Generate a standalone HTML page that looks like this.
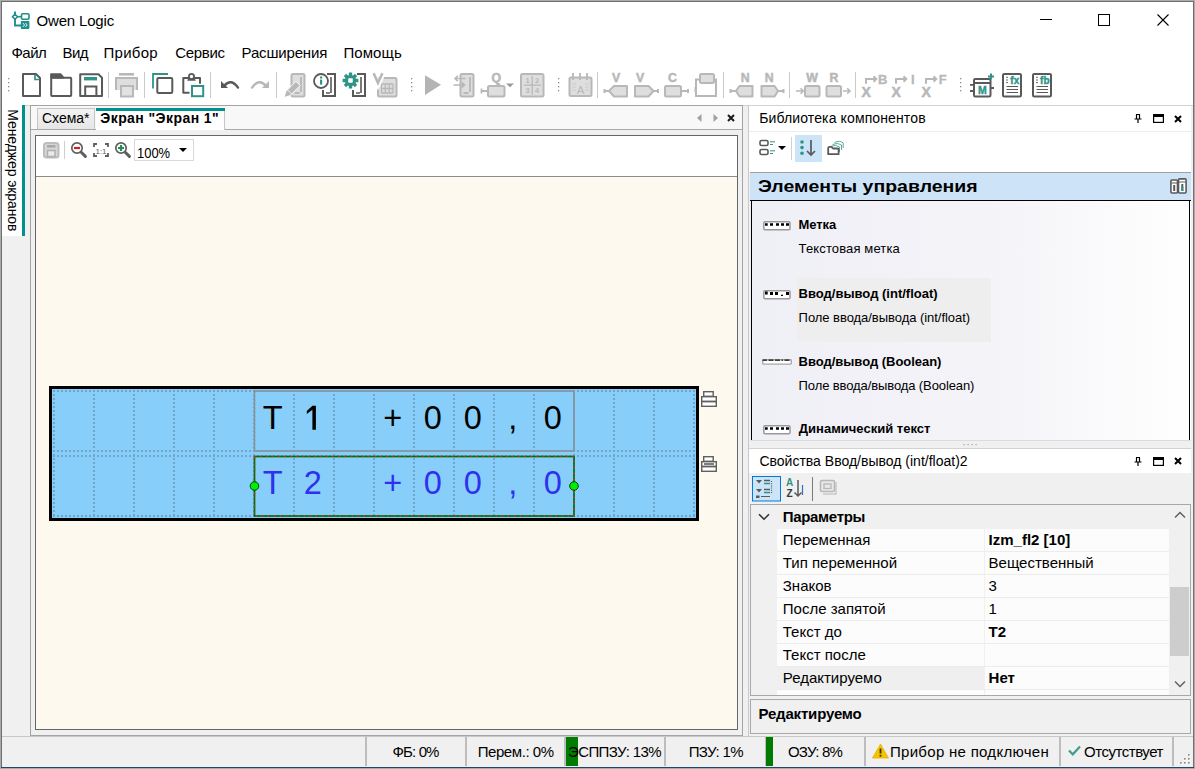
<!DOCTYPE html><html><head><meta charset="utf-8"><style>
html,body{margin:0;padding:0;}
body{width:1195px;height:769px;position:relative;overflow:hidden;background:#f0f0f0;font-family:"Liberation Sans",sans-serif;color:#000;}
.t{position:absolute;white-space:pre;}
svg{display:block;}
</style></head><body>
<div style="position:absolute;left:0px;top:0px;width:1195px;height:105px;background:#fff"></div>
<div style="position:absolute;left:2px;top:105px;width:1191px;height:1px;background:#d4d4d4"></div>
<div style="position:absolute;left:0px;top:0px;width:1195px;height:1px;background:#ababab"></div>
<div style="position:absolute;left:0px;top:0px;width:1px;height:769px;background:#ababab"></div>
<div style="position:absolute;left:1194px;top:0px;width:1px;height:769px;background:#ababab"></div>
<div style="position:absolute;left:0px;top:768px;width:1195px;height:1px;background:#ababab"></div>
<div style="position:absolute;left:1px;top:1px;width:1193px;height:1px;background:#6f6f6f"></div>
<div style="position:absolute;left:1px;top:1px;width:1px;height:767px;background:#6f6f6f"></div>
<div style="position:absolute;left:1193px;top:1px;width:1px;height:767px;background:#6f6f6f"></div>
<div style="position:absolute;left:1px;top:767px;width:1193px;height:1px;background:#1d4668"></div>
<div class="t" style="left:36.50px;top:11.80px;font-size:15px;line-height:18px;letter-spacing:-0.172px;">Owen Logic</div>
<div style="position:absolute;left:1040px;top:19px;width:12px;height:1px;background:#000"></div>
<div style="position:absolute;left:1098px;top:14px;width:12px;height:12px;border:1px solid #000;box-sizing:border-box"></div>
<svg style="position:absolute;left:1157px;top:14px;" width="12" height="12" viewBox="0 0 12 12"><path d="M0.5 0.5L11.5 11.5M11.5 0.5L0.5 11.5" stroke="#000" stroke-width="1.1"/></svg>
<div class="t" style="left:11.40px;top:43.80px;font-size:15px;line-height:18px;letter-spacing:-0.469px;">Файл</div>
<div class="t" style="left:62.50px;top:43.80px;font-size:15px;line-height:18px;letter-spacing:-0.542px;">Вид</div>
<div class="t" style="left:103.50px;top:43.80px;font-size:15px;line-height:18px;letter-spacing:0.286px;">Прибор</div>
<div class="t" style="left:175.20px;top:43.80px;font-size:15px;line-height:18px;letter-spacing:-0.293px;">Сервис</div>
<div class="t" style="left:241.60px;top:43.80px;font-size:15px;line-height:18px;letter-spacing:-0.172px;">Расширения</div>
<div class="t" style="left:343.40px;top:43.80px;font-size:15px;line-height:18px;letter-spacing:0.094px;">Помощь</div>
<svg style="position:absolute;left:0;top:0" width="1195" height="105" viewBox="0 0 1195 105"><rect x="8" y="78" width="1.3" height="1.3" fill="#8a8a8a"/><rect x="8" y="82" width="1.3" height="1.3" fill="#8a8a8a"/><rect x="8" y="86" width="1.3" height="1.3" fill="#8a8a8a"/><rect x="8" y="90" width="1.3" height="1.3" fill="#8a8a8a"/><path d="M23 74H36L40 78V96H23Z" fill="none" stroke="#595959" stroke-width="2" stroke-linejoin="round"/><path d="M35 74.5V79.5H39.5" fill="none" stroke="#2f9488" stroke-width="1.7"/><path d="M51 77.5V74.2H60.5L63.5 77.5Z" fill="#595959" stroke="#595959" stroke-width="1.8" stroke-linejoin="round"/><rect x="51.2" y="77.8" width="20" height="18.2" fill="none" stroke="#595959" stroke-width="2" rx="0.8"/><path d="M80.2 74.2H98.5L102 77.7V96H80.2Z" fill="none" stroke="#595959" stroke-width="2" stroke-linejoin="round"/><rect x="84" y="77" width="13" height="3.4" fill="#2f9488"/><path d="M85.2 96V86.4H96.4V96" fill="none" stroke="#595959" stroke-width="2"/><rect x="108" y="72" width="1" height="26" fill="#cacaca"/><rect x="119" y="73" width="15" height="2.6" fill="#b8b8b8"/><path d="M116 90V78H137V90" fill="#dedede" stroke="#b8b8b8" stroke-width="2"/><rect x="121" y="86" width="12" height="10.5" fill="#e2e2e2" stroke="#b8b8b8" stroke-width="2"/><rect x="144" y="72" width="1" height="26" fill="#cacaca"/><path d="M153 88.6V74H168" fill="none" stroke="#2f9488" stroke-width="1.8"/><rect x="157.3" y="78" width="15" height="15" rx="1.2" fill="none" stroke="#595959" stroke-width="2"/><path d="M189.5 92.8H183.3V78H200V83.8" fill="none" stroke="#595959" stroke-width="2" stroke-linejoin="round"/><path d="M187.2 80.8L188.8 77.2H194.2L195.8 80.8Z" fill="#595959"/><circle cx="191.5" cy="76.5" r="2.6" fill="#fff" stroke="#595959" stroke-width="1.8"/><rect x="192" y="86" width="11.2" height="10.2" fill="#fff" stroke="#2f9488" stroke-width="2"/><rect x="210" y="72" width="1" height="26" fill="#cacaca"/><path d="M224.5 85.6Q231 78 238 87.6" fill="none" stroke="#595959" stroke-width="2.4" stroke-linecap="round"/><path d="M221 81V88H228Z" fill="#595959"/><path d="M265.5 85.6Q259 78 252 87.6" fill="none" stroke="#b8b8b8" stroke-width="2.4" stroke-linecap="round"/><path d="M269 81V88H262Z" fill="#b8b8b8"/><rect x="276" y="72" width="1" height="26" fill="#cacaca"/><rect x="291.5" y="74" width="13" height="22.5" rx="1.5" fill="#dedede" stroke="#b8b8b8" stroke-width="2"/><path d="M301.0 77V92M294.5 93H299.5" stroke="#b8b8b8" stroke-width="1.8"/><path d="M284 97.5L285.8 91.5L296 81.3L300.2 85.5L290 95.7Z" fill="#b8b8b8" stroke="#fff" stroke-width="1"/><path d="M287.5 89.8L291.7 94" stroke="#fff" stroke-width="0.8"/><path d="M327 74H335V96H323V90" fill="none" stroke="#595959" stroke-width="2"/><path d="M331 77V93M326 93H330" stroke="#595959" stroke-width="1.6"/><circle cx="321" cy="81" r="7" fill="#fff" stroke="#595959" stroke-width="1.8"/><rect x="320" y="76.5" width="2.2" height="2" fill="#2f9488"/><rect x="320" y="79.6" width="2.2" height="5" fill="#2f9488"/><path d="M357 74H365V96H353V90" fill="none" stroke="#595959" stroke-width="2"/><path d="M361 77V93M356 93H360" stroke="#595959" stroke-width="1.6"/><rect x="348.8" y="72.6" width="3.4" height="4" rx="0.3" transform="rotate(0 350.5 80.5)" fill="#2f9488"/><rect x="348.8" y="72.6" width="3.4" height="4" rx="0.3" transform="rotate(45 350.5 80.5)" fill="#2f9488"/><rect x="348.8" y="72.6" width="3.4" height="4" rx="0.3" transform="rotate(90 350.5 80.5)" fill="#2f9488"/><rect x="348.8" y="72.6" width="3.4" height="4" rx="0.3" transform="rotate(135 350.5 80.5)" fill="#2f9488"/><rect x="348.8" y="72.6" width="3.4" height="4" rx="0.3" transform="rotate(180 350.5 80.5)" fill="#2f9488"/><rect x="348.8" y="72.6" width="3.4" height="4" rx="0.3" transform="rotate(225 350.5 80.5)" fill="#2f9488"/><rect x="348.8" y="72.6" width="3.4" height="4" rx="0.3" transform="rotate(270 350.5 80.5)" fill="#2f9488"/><rect x="348.8" y="72.6" width="3.4" height="4" rx="0.3" transform="rotate(315 350.5 80.5)" fill="#2f9488"/><circle cx="350.5" cy="80.5" r="5.6" fill="#2f9488"/><rect x="348.2" y="78.2" width="4.6" height="4.6" rx="0.8" fill="#fff"/><rect x="378" y="78" width="18.5" height="18.5" rx="1.5" fill="#dedede" stroke="#b8b8b8" stroke-width="2"/><path d="M381.5 84H393M381.5 88.5H393M381.5 93H393M381.5 84V93M385.3 84V93M389.2 84V93M393 84V93" stroke="#b8b8b8" stroke-width="1.3" fill="none"/><path d="M372.5 73L378 84.5L383.5 73" stroke="#fff" stroke-width="5" fill="none"/><path d="M373.6 73.3L378 82.8L382.4 73.3" stroke="#b8b8b8" stroke-width="2.6" fill="none"/><rect x="411" y="78" width="1.3" height="1.3" fill="#8a8a8a"/><rect x="411" y="82" width="1.3" height="1.3" fill="#8a8a8a"/><rect x="411" y="86" width="1.3" height="1.3" fill="#8a8a8a"/><rect x="411" y="90" width="1.3" height="1.3" fill="#8a8a8a"/><path d="M425 75.3L441 84.8L425 95Z" fill="#b4b4b4"/><rect x="460.5" y="74" width="13" height="22.5" rx="1.5" fill="#dedede" stroke="#b8b8b8" stroke-width="2"/><path d="M470.0 77V92M463.5 93H468.5" stroke="#b8b8b8" stroke-width="1.8"/><path d="M465.5 78.5H455M457.8 75.8L455 78.5L457.8 81.2M453.5 85H464.5M461.7 82.3L464.5 85L461.7 87.7" stroke="#b8b8b8" stroke-width="1.6" fill="none"/><text x="496.3" y="82.3" font-family="Liberation Sans" font-weight="bold" font-size="12.3" fill="#b8b8b8" stroke="#b8b8b8" stroke-width="0.5" text-anchor="middle">Q</text><rect x="488" y="86" width="16.5" height="10.5" rx="1.5" fill="#dedede" stroke="#b8b8b8" stroke-width="2"/><path d="M481.5 91H488M481.5 88.5V93.5" stroke="#b8b8b8" stroke-width="1.8"/><path d="M506 83.5H514L510 87.3Z" fill="#9a9a9a"/><rect x="521" y="74" width="22.5" height="22.5" rx="1.5" fill="#dedede" stroke="#b8b8b8" stroke-width="2"/><path d="M532.2 76V94.5M524 85.2H541" stroke="#b8b8b8" stroke-width="1.3"/><text x="527.7" y="83" font-family="Liberation Sans" font-weight="bold" font-size="7.5" fill="#b8b8b8" text-anchor="middle">1</text><text x="537" y="83" font-family="Liberation Sans" font-weight="bold" font-size="7.5" fill="#b8b8b8" text-anchor="middle">2</text><text x="527.7" y="93.3" font-family="Liberation Sans" font-weight="bold" font-size="7.5" fill="#b8b8b8" text-anchor="middle">3</text><text x="537" y="93.3" font-family="Liberation Sans" font-weight="bold" font-size="7.5" fill="#b8b8b8" text-anchor="middle">4</text><rect x="558" y="78" width="1.3" height="1.3" fill="#8a8a8a"/><rect x="558" y="82" width="1.3" height="1.3" fill="#8a8a8a"/><rect x="558" y="86" width="1.3" height="1.3" fill="#8a8a8a"/><rect x="558" y="90" width="1.3" height="1.3" fill="#8a8a8a"/><rect x="569.5" y="77.5" width="22" height="18.5" rx="1.5" fill="#dedede" stroke="#b8b8b8" stroke-width="2"/><path d="M573 73V80M580 73V80M587 73V80" stroke="#b8b8b8" stroke-width="1.8"/><path d="M572 84H576M572 87H576M572 90H576M585 84H589M585 87H589M585 90H589" stroke="#c8c8c8" stroke-width="0.9"/><text x="580.5" y="93.8" font-family="Liberation Sans" font-size="11.5" fill="#b8b8b8" text-anchor="middle">A</text><rect x="597" y="72" width="1" height="26" fill="#cacaca"/><text x="616" y="82.3" font-family="Liberation Sans" font-weight="bold" font-size="12.3" fill="#b8b8b8" stroke="#b8b8b8" stroke-width="0.5" text-anchor="middle">V</text><path d="M604.5 91H609M604.5 89V93M609 91L614 86H627V96.5H614Z" stroke="#b8b8b8" stroke-width="2" fill="#dedede" stroke-linejoin="round"/><text x="640" y="82.3" font-family="Liberation Sans" font-weight="bold" font-size="12.3" fill="#b8b8b8" stroke="#b8b8b8" stroke-width="0.5" text-anchor="middle">V</text><path d="M658 91H653.5M658 89V93M653.5 91L648.5 86H635V96.5H648.5Z" stroke="#b8b8b8" stroke-width="2" fill="#dedede" stroke-linejoin="round"/><text x="672.5" y="82.3" font-family="Liberation Sans" font-weight="bold" font-size="12.3" fill="#b8b8b8" stroke="#b8b8b8" stroke-width="0.5" text-anchor="middle">C</text><rect x="665" y="86" width="16" height="10.5" rx="1.5" fill="#dedede" stroke="#b8b8b8" stroke-width="2"/><path d="M681 91H688M688 89V93" stroke="#b8b8b8" stroke-width="2"/><path d="M699 79.5H696V96H716V79.5H714" fill="none" stroke="#b8b8b8" stroke-width="2"/><rect x="700" y="74" width="14" height="9" rx="1.5" fill="#dedede" stroke="#b8b8b8" stroke-width="2"/><rect x="694.5" y="87" width="2.5" height="5" fill="#b8b8b8"/><rect x="723" y="72" width="1" height="26" fill="#cacaca"/><text x="745.3" y="82.3" font-family="Liberation Sans" font-weight="bold" font-size="12.3" fill="#b8b8b8" stroke="#b8b8b8" stroke-width="0.5" text-anchor="middle">N</text><path d="M730.5 91H736M730.5 89V93M736 91L739.5 86H752.5V96.5H739.5Z" stroke="#b8b8b8" stroke-width="2" fill="#dedede" stroke-linejoin="round"/><text x="769.3" y="82.3" font-family="Liberation Sans" font-weight="bold" font-size="12.3" fill="#b8b8b8" stroke="#b8b8b8" stroke-width="0.5" text-anchor="middle">N</text><path d="M783.5 91H778M783.5 89V93M778 91L774.5 86H761.5V96.5H774.5Z" stroke="#b8b8b8" stroke-width="2" fill="#dedede" stroke-linejoin="round"/><rect x="789" y="72" width="1" height="26" fill="#cacaca"/><text x="812" y="82.3" font-family="Liberation Sans" font-weight="bold" font-size="12.3" fill="#b8b8b8" stroke="#b8b8b8" stroke-width="0.5" text-anchor="middle">W</text><rect x="805" y="86" width="14.5" height="10.5" rx="1.5" fill="#dedede" stroke="#b8b8b8" stroke-width="2"/><path d="M796 91H803M800.5 88.2L803.3 91L800.5 93.8" stroke="#b8b8b8" stroke-width="1.6" fill="none"/><text x="834" y="82.3" font-family="Liberation Sans" font-weight="bold" font-size="12.3" fill="#b8b8b8" stroke="#b8b8b8" stroke-width="0.5" text-anchor="middle">R</text><rect x="826.5" y="86" width="14.5" height="10.5" rx="1.5" fill="#dedede" stroke="#b8b8b8" stroke-width="2"/><path d="M843 91H850M847.2 88.2L850 91L847.2 93.8" stroke="#b8b8b8" stroke-width="1.6" fill="none"/><rect x="855" y="72" width="1" height="26" fill="#cacaca"/><text x="866.2" y="97.3" font-family="Liberation Sans" font-weight="bold" font-size="14" fill="#b8b8b8" stroke="#b8b8b8" stroke-width="0.5" text-anchor="middle">X</text><path d="M866 83.8V79H876M873.5 76.3L876.3 79L873.5 81.7" transform="translate(0,0)" stroke="#b8b8b8" stroke-width="2" fill="none"/><text x="882.8" y="83.8" font-family="Liberation Sans" font-weight="bold" font-size="13" fill="#b8b8b8" stroke="#b8b8b8" stroke-width="0.3" text-anchor="middle">B</text><text x="896.2" y="97.3" font-family="Liberation Sans" font-weight="bold" font-size="14" fill="#b8b8b8" stroke="#b8b8b8" stroke-width="0.5" text-anchor="middle">X</text><path d="M866 83.8V79H876M873.5 76.3L876.3 79L873.5 81.7" transform="translate(30,0)" stroke="#b8b8b8" stroke-width="2" fill="none"/><text x="912.8" y="83.8" font-family="Liberation Sans" font-weight="bold" font-size="13" fill="#b8b8b8" stroke="#b8b8b8" stroke-width="0.3" text-anchor="middle">I</text><text x="926.2" y="97.3" font-family="Liberation Sans" font-weight="bold" font-size="14" fill="#b8b8b8" stroke="#b8b8b8" stroke-width="0.5" text-anchor="middle">X</text><path d="M866 83.8V79H876M873.5 76.3L876.3 79L873.5 81.7" transform="translate(60,0)" stroke="#b8b8b8" stroke-width="2" fill="none"/><text x="942.8" y="83.8" font-family="Liberation Sans" font-weight="bold" font-size="13" fill="#b8b8b8" stroke="#b8b8b8" stroke-width="0.3" text-anchor="middle">F</text><rect x="960" y="78" width="1.3" height="1.3" fill="#8a8a8a"/><rect x="960" y="82" width="1.3" height="1.3" fill="#8a8a8a"/><rect x="960" y="86" width="1.3" height="1.3" fill="#8a8a8a"/><rect x="960" y="90" width="1.3" height="1.3" fill="#8a8a8a"/><rect x="974" y="79" width="16.5" height="17.5" rx="1.2" fill="#fff" stroke="#595959" stroke-width="2"/><path d="M974 83H990.5M970 84.8H974M970 91H974M990.5 88H994" stroke="#595959" stroke-width="1.8"/><text x="982.3" y="93.6" font-family="Liberation Sans" font-weight="bold" font-size="10.5" fill="#2f9488" stroke="#2f9488" stroke-width="0.4" text-anchor="middle">M</text><path d="M991 73.5V79.5M988 76.5H994" stroke="#2f9488" stroke-width="2"/><rect x="1003" y="74" width="18" height="22.5" rx="1.2" fill="#fff" stroke="#595959" stroke-width="2"/><path d="M1006 77.3H1008M1006 80H1008M1006 82.6H1008" stroke="#595959" stroke-width="0.9"/><path d="M1006.5 86.5H1018M1006.5 89.5H1018M1006.5 92.5H1018" stroke="#595959" stroke-width="1"/><text x="1014.8" y="84" font-family="Liberation Sans" font-weight="bold" font-size="10" fill="#2f9488" stroke="#2f9488" stroke-width="0.4" text-anchor="middle">fx</text><rect x="1033" y="74" width="18" height="22.5" rx="1.2" fill="#fff" stroke="#595959" stroke-width="2"/><path d="M1036 77.3H1038M1036 80H1038M1036 82.6H1038" stroke="#595959" stroke-width="0.9"/><path d="M1036.5 86.5H1048M1036.5 89.5H1048M1036.5 92.5H1048" stroke="#595959" stroke-width="1"/><text x="1044.8" y="84" font-family="Liberation Sans" font-weight="bold" font-size="10" fill="#2f9488" stroke="#2f9488" stroke-width="0.4" text-anchor="middle">fb</text></svg>
<svg style="position:absolute;left:0;top:0" width="40" height="40" viewBox="0 0 40 40"><path d="M15 11.5V25.5H21" fill="none" stroke="#1f8f8a" stroke-width="1.9"/><path d="M15 14.2L17.5 16.7L15 19.2L12.5 16.7Z" fill="#fff" stroke="#1f8f8a" stroke-width="1.6"/><path d="M17.5 16.7H22" stroke="#1f8f8a" stroke-width="1.6"/><rect x="21.5" y="13.7" width="7.5" height="5.5" rx="1.2" fill="#fff" stroke="#1f8f8a" stroke-width="1.6"/><rect x="20.8" y="21" width="8.6" height="8" rx="1" fill="#1f8f8a"/><path d="M22.8 23L24.6 25L22.8 27M25.4 23L27.2 25L25.4 27" stroke="#fff" stroke-width="0.9" fill="none"/></svg>
<div style="position:absolute;left:2px;top:105px;width:20px;height:131px;background:#fff"></div>
<div style="position:absolute;left:22px;top:105px;width:3px;height:131px;background:#00918f"></div>
<div class="t" style="left:0;top:0;font-size:14px;line-height:17px;letter-spacing:-0.1px;transform-origin:0 0;transform:translate(21.4px,109.3px) rotate(90deg)">Менеджер экранов</div>
<div style="position:absolute;left:30px;top:105px;width:713px;height:631px;border:1px solid #a3a3a3;box-sizing:border-box;background:#f0f0f0"></div>
<div style="position:absolute;left:31px;top:106px;width:711px;height:23px;background:#f8f8f8"></div>
<div style="position:absolute;left:31px;top:129px;width:711px;height:1px;background:#a9a9a9"></div>
<div style="position:absolute;left:37px;top:108px;width:58px;height:21px;border:1px solid #c6c6c6;border-bottom:none;box-sizing:border-box;background:linear-gradient(#f2f2f2,#e6e6e6)"></div>
<div class="t" style="left:42.00px;top:110.35px;font-size:14px;line-height:17px;letter-spacing:-0.032px;">Схема*</div>
<div style="position:absolute;left:96px;top:108px;width:129px;height:22px;background:#fff;border-right:1px solid #c6c6c6;box-sizing:border-box"></div>
<div style="position:absolute;left:96px;top:108px;width:129px;height:3px;background:#00918f"></div>
<div class="t" style="left:100.30px;top:110.35px;font-size:14px;line-height:17px;font-weight:bold;letter-spacing:0.432px;">Экран &quot;Экран 1&quot;</div>
<svg style="position:absolute;left:697px;top:114px;" width="5" height="8" viewBox="0 0 5 8"><path d="M4.5 0L0 4L4.5 8Z" fill="#a0a0a0"/></svg>
<svg style="position:absolute;left:713px;top:114px;" width="5" height="8" viewBox="0 0 5 8"><path d="M0.5 0L5 4L0.5 8Z" fill="#a0a0a0"/></svg>
<svg style="position:absolute;left:727px;top:114px;" width="8" height="8" viewBox="0 0 8 8"><path d="M1 1L7 7M7 1L1 7" stroke="#1a1a1a" stroke-width="2"/></svg>
<div style="position:absolute;left:35px;top:135px;width:703px;height:595px;border:1px solid #666;box-sizing:border-box;background:#fff"></div>
<div style="position:absolute;left:36px;top:176px;width:701px;height:1px;background:#8c8c8c"></div>
<div style="position:absolute;left:36px;top:177px;width:701px;height:552px;background:#fef9ee"></div>
<svg style="position:absolute;left:0;top:0" width="200" height="170" viewBox="0 0 200 170"><rect x="44" y="143" width="14.5" height="14.5" rx="2.5" fill="#d6d6d6" stroke="#bdbdbd" stroke-width="2"/><rect x="47" y="145" width="8.5" height="2.6" fill="#a9a9a9"/><rect x="47.5" y="150.5" width="7.5" height="6" fill="#eaeaea" stroke="#b0b0b0" stroke-width="1.5"/><rect x="64" y="141" width="1" height="18" fill="#cfcfcf"/><path d="M81.2 152.2L85.4 156.4" stroke="#5f5f5f" stroke-width="3" stroke-linecap="round"/><circle cx="77" cy="148" r="5.2" fill="#fff" stroke="#5f5f5f" stroke-width="1.7"/><rect x="74" y="146.9" width="6" height="2.2" fill="#d42020"/><path d="M125.2 152.2L129.4 156.4" stroke="#5f5f5f" stroke-width="3" stroke-linecap="round"/><circle cx="121" cy="148" r="5.2" fill="#fff" stroke="#5f5f5f" stroke-width="1.7"/><path d="M118 148H124M121 145V151" stroke="#1f8f5a" stroke-width="2.2"/><path d="M94 147V144H97M105 144H108V147M108 153V156H105M97 156H94V153" fill="none" stroke="#5f5f5f" stroke-width="1.8"/><text x="101" y="153.5" font-family="Liberation Sans" font-size="8" fill="#5f5f5f" text-anchor="middle">1:1</text></svg>
<div style="position:absolute;left:134px;top:139px;width:60px;height:22px;border:1px solid #d9d9d9;box-sizing:border-box;background:#fff"></div>
<div class="t" style="left:136.70px;top:143.13px;font-size:15.5px;line-height:19px;transform-origin:0 0;transform:scaleX(0.835);">100%</div>
<svg style="position:absolute;left:179px;top:148px;" width="8" height="4" viewBox="0 0 8 4"><path d="M0 0H8L4 4Z" fill="#000"/></svg>
<div style="position:absolute;left:49px;top:386px;width:650px;height:135px;background:#000"></div>
<div style="position:absolute;left:52px;top:389px;width:644px;height:129px;background:#87cefa"></div>
<svg style="position:absolute;left:0;top:0" width="760" height="530" viewBox="0 0 760 530"><defs><pattern id="ph" x="53" y="0" width="4" height="2" patternUnits="userSpaceOnUse"><rect width="2" height="2" fill="#72a5ca"/></pattern><pattern id="pv" x="0" y="390" width="2" height="4" patternUnits="userSpaceOnUse"><rect width="2" height="2" fill="#72a5ca"/></pattern></defs><rect x="53" y="390" width="643" height="2" fill="url(#ph)"/><rect x="53" y="450" width="643" height="2" fill="url(#ph)"/><rect x="53" y="455" width="643" height="2" fill="url(#ph)"/><rect x="53" y="515" width="643" height="2" fill="url(#ph)"/><rect x="53" y="390" width="2" height="127" fill="url(#pv)"/><rect x="93" y="390" width="2" height="127" fill="url(#pv)"/><rect x="133" y="390" width="2" height="127" fill="url(#pv)"/><rect x="173" y="390" width="2" height="127" fill="url(#pv)"/><rect x="213" y="390" width="2" height="127" fill="url(#pv)"/><rect x="253" y="390" width="2" height="127" fill="url(#pv)"/><rect x="293" y="390" width="2" height="127" fill="url(#pv)"/><rect x="333" y="390" width="2" height="127" fill="url(#pv)"/><rect x="373" y="390" width="2" height="127" fill="url(#pv)"/><rect x="413" y="390" width="2" height="127" fill="url(#pv)"/><rect x="453" y="390" width="2" height="127" fill="url(#pv)"/><rect x="493" y="390" width="2" height="127" fill="url(#pv)"/><rect x="533" y="390" width="2" height="127" fill="url(#pv)"/><rect x="573" y="390" width="2" height="127" fill="url(#pv)"/><rect x="613" y="390" width="2" height="127" fill="url(#pv)"/><rect x="653" y="390" width="2" height="127" fill="url(#pv)"/><rect x="693" y="390" width="2" height="127" fill="url(#pv)"/><rect x="254.5" y="391" width="319.5" height="60" fill="none" stroke="#8c8c8c" stroke-width="1.7" stroke-dasharray="3 1"/><rect x="254.5" y="456.5" width="319.5" height="59.5" fill="none" stroke="#0a6a0a" stroke-width="1.7"/><rect x="254.5" y="456.5" width="319.5" height="59.5" fill="none" stroke="#ff2020" stroke-width="1.7" stroke-dasharray="1 5"/><circle cx="254.5" cy="486" r="4.3" fill="#00ee00" stroke="#004400" stroke-width="1"/><circle cx="574" cy="486" r="4.3" fill="#00ee00" stroke="#004400" stroke-width="1"/></svg>
<div class="t" style="left:252.8px;top:398px;width:40px;text-align:center;font-size:32.5px;line-height:40px;">T</div>
<div class="t" style="left:252.8px;top:463px;width:40px;text-align:center;font-size:32.5px;line-height:40px;color:#3030ee">T</div>
<svg style="position:absolute;left:300px;top:400px;" width="24" height="36" viewBox="0 0 24 36"><path d="M12.4 5.8H15.9V29.7H12.4V9.8L6.8 13.9V10.9Z" fill="#000"/></svg>
<div class="t" style="left:292.8px;top:463px;width:40px;text-align:center;font-size:32.5px;line-height:40px;color:#3030ee">2</div>
<div class="t" style="left:372.8px;top:398px;width:40px;text-align:center;font-size:32.5px;line-height:40px;">+</div>
<div class="t" style="left:372.8px;top:463px;width:40px;text-align:center;font-size:32.5px;line-height:40px;color:#3030ee">+</div>
<div class="t" style="left:412.8px;top:398px;width:40px;text-align:center;font-size:32.5px;line-height:40px;">0</div>
<div class="t" style="left:412.8px;top:463px;width:40px;text-align:center;font-size:32.5px;line-height:40px;color:#3030ee">0</div>
<div class="t" style="left:452.8px;top:398px;width:40px;text-align:center;font-size:32.5px;line-height:40px;">0</div>
<div class="t" style="left:452.8px;top:463px;width:40px;text-align:center;font-size:32.5px;line-height:40px;color:#3030ee">0</div>
<div class="t" style="left:492.79999999999995px;top:398px;width:40px;text-align:center;font-size:32.5px;line-height:40px;">,</div>
<div class="t" style="left:492.79999999999995px;top:463px;width:40px;text-align:center;font-size:32.5px;line-height:40px;color:#3030ee">,</div>
<div class="t" style="left:532.8px;top:398px;width:40px;text-align:center;font-size:32.5px;line-height:40px;">0</div>
<div class="t" style="left:532.8px;top:463px;width:40px;text-align:center;font-size:32.5px;line-height:40px;color:#3030ee">0</div>
<svg style="position:absolute;left:701px;top:391px;" width="16" height="16" viewBox="0 0 16 16"><rect x="2.7" y="0.7" width="9.5" height="4.6" fill="#fff" stroke="#5f5f5f" stroke-width="1.4"/><rect x="0.7" y="5.7" width="14.6" height="4.6" fill="#fff" stroke="#5f5f5f" stroke-width="1.4"/><rect x="0.7" y="10.7" width="14.6" height="4.6" fill="#fff" stroke="#5f5f5f" stroke-width="1.4"/><rect x="3" y="7.2" width="10" height="1.6" fill="#fff"/></svg>
<svg style="position:absolute;left:701px;top:456px;" width="16" height="16" viewBox="0 0 16 16"><rect x="2.7" y="0.7" width="9.5" height="4.6" fill="#fff" stroke="#5f5f5f" stroke-width="1.4"/><rect x="0.7" y="5.7" width="14.6" height="4.6" fill="#fff" stroke="#5f5f5f" stroke-width="1.4"/><rect x="0.7" y="10.7" width="14.6" height="4.6" fill="#fff" stroke="#5f5f5f" stroke-width="1.4"/><rect x="3" y="7.2" width="10" height="1.6" fill="#5f5f5f"/></svg>
<div style="position:absolute;left:748px;top:105px;width:444px;height:631px;background:#f0f0f0"></div>
<div style="position:absolute;left:748px;top:105px;width:444px;height:1px;background:#d2d2d2"></div>
<div style="position:absolute;left:748px;top:105px;width:1px;height:631px;background:#c9c9c9"></div>
<div style="position:absolute;left:749px;top:106px;width:442px;height:25px;background:#fff"></div>
<div style="position:absolute;left:749px;top:131px;width:442px;height:1px;background:#ececec"></div>
<div style="position:absolute;left:749px;top:132px;width:442px;height:40px;background:#fff"></div>
<div class="t" style="left:759.20px;top:110.35px;font-size:14px;line-height:17px;letter-spacing:0.124px;">Библиотека компонентов</div>
<svg style="position:absolute;left:1134px;top:114px;" width="8" height="9" viewBox="0 0 8 9"><path d="M2 0.5H6M2.5 0.5V5M5.5 0.5V5M0.5 5H7.5M4 5V9" stroke="#000" stroke-width="1.2" fill="none"/></svg>
<svg style="position:absolute;left:1153px;top:114px;" width="11" height="9" viewBox="0 0 11 9"><rect x="0.6" y="0.6" width="9.8" height="7.8" fill="none" stroke="#000" stroke-width="1.2"/><rect x="0.6" y="0.6" width="9.8" height="2.4" fill="#000"/></svg>
<svg style="position:absolute;left:1174px;top:114.5px;" width="8" height="8" viewBox="0 0 8 8"><path d="M1 1L7 7M7 1L1 7" stroke="#000" stroke-width="2"/></svg>
<svg style="position:absolute;left:0;top:0" width="1195" height="200" viewBox="0 0 1195 200"><rect x="760" y="140.5" width="8" height="5" rx="1.5" fill="none" stroke="#5a5a5a" stroke-width="1.6"/><rect x="760" y="149.5" width="8" height="5" rx="1.5" fill="none" stroke="#5a5a5a" stroke-width="1.6"/><rect x="770" y="141.3" width="5" height="1" fill="#2f9488"/><rect x="770" y="144" width="3" height="1" fill="#2f9488"/><rect x="770" y="150.3" width="5" height="1" fill="#2f9488"/><rect x="770" y="153" width="3" height="1" fill="#2f9488"/><path d="M778 146H786L782 150Z" fill="#000"/><rect x="791" y="137" width="1" height="23" fill="#d0d0d0"/><rect x="795" y="135" width="27" height="27" fill="#cce4f7"/><circle cx="802" cy="142" r="1.8" fill="#2f9488"/><circle cx="802" cy="147.6" r="1.8" fill="#2f9488"/><circle cx="802" cy="153.2" r="1.8" fill="#2f9488"/><path d="M811 140V155M807 151L811 155L815 151" stroke="#5a5a5a" stroke-width="1.7" fill="none"/><path d="M830.5 146.5Q836 144 839.5 147V152M832.5 144.5Q838 142 841.5 145V150M834.5 142.5Q840 140 843.2 143V148" stroke="#2f9488" stroke-width="0.8" fill="none"/><path d="M828.2 154.2V148Q828.2 146.8 829.5 146.8H831.5L833 148.5H837.5Q838.6 148.5 838.6 149.6V154.2Z" fill="#fff" stroke="#5a5a5a" stroke-width="1.8" stroke-linejoin="round"/></svg>
<div style="position:absolute;left:750px;top:172px;width:441px;height:1px;background:#a0a0a0"></div>
<div style="position:absolute;left:750px;top:173px;width:441px;height:27px;background:#cde3f7"></div>
<div style="position:absolute;left:750px;top:200px;width:441px;height:1px;background:#000"></div>
<div class="t" style="left:757.50px;top:177.36px;font-size:16px;line-height:19px;font-weight:bold;transform-origin:0 0;transform:scaleX(1.217);">Элементы управления</div>
<svg style="position:absolute;left:1170px;top:178px;" width="17" height="16" viewBox="0 0 17 16"><rect x="0.9" y="2" width="6.6" height="13" rx="1" fill="#fff" stroke="#5a5a5a" stroke-width="1.6"/><rect x="8.5" y="0.9" width="7.6" height="14.1" rx="1" fill="#fff" stroke="#5a5a5a" stroke-width="1.6"/><path d="M4.2 7V13M12.3 6V13" stroke="#5a5a5a" stroke-width="2"/><path d="M12.3 8.5V13" stroke="#2f9488" stroke-width="2.2"/><path d="M1.5 5H7M9 4H15.5" stroke="#5a5a5a" stroke-width="1.2"/></svg>
<div style="position:absolute;left:751px;top:201px;width:440px;height:240px;background:linear-gradient(to right,#efeff6 0%,#f3f3f8 50%,#ffffff 100%)"></div>
<div style="position:absolute;left:751px;top:201px;width:1px;height:239px;background:#000"></div>
<div style="position:absolute;left:1189px;top:201px;width:1px;height:239px;background:#000"></div>
<div style="position:absolute;left:751px;top:440px;width:440px;height:1px;background:#dcdcdc"></div>
<div style="position:absolute;left:797px;top:278px;width:194px;height:64px;background:#eeeeee"></div>
<svg style="position:absolute;left:763px;top:221px;" width="28" height="10" viewBox="0 0 28 10"><rect x="0.8" y="0.8" width="26.2" height="8" rx="1.2" fill="#fff" stroke="#9a9a9a" stroke-width="1.5"/><path d="M2 3.5H4.7M7 3.5H10M13 3.5H16M18 3.5H21M23 3.5H26" stroke="#000" stroke-width="2.6"/></svg>
<svg style="position:absolute;left:763px;top:289.5px;" width="28" height="10" viewBox="0 0 28 10"><rect x="0.8" y="0.8" width="26.2" height="8" rx="1.2" fill="#fff" stroke="#9a9a9a" stroke-width="1.5"/><path d="M2 3H4.7M7 3.5H10M12 3.5H15M23 3.5H26" stroke="#000" stroke-width="2.8"/><path d="M18 5.4H20" stroke="#000" stroke-width="1.2"/></svg>
<svg style="position:absolute;left:762px;top:359px;" width="30" height="6" viewBox="0 0 30 6"><rect x="0.7" y="0.7" width="28.6" height="4.4" rx="0.8" fill="#fff" stroke="#a8a8a8" stroke-width="1.4"/><path d="M0.5 1.2H29.5" stroke="#111" stroke-width="1.3" stroke-dasharray="4.5 1.5 5 1.5 5 1.5 1.5 1.5 5"/></svg>
<svg style="position:absolute;left:763px;top:425px;" width="28" height="10" viewBox="0 0 28 10"><rect x="0.8" y="0.8" width="26.2" height="8" rx="1.2" fill="#fff" stroke="#9a9a9a" stroke-width="1.5"/><path d="M2 3.5H4.7M7 3.5H10M13 3.5H16M18 3.5H21M23 3.5H26" stroke="#000" stroke-width="2.6"/></svg>
<div class="t" style="left:798.60px;top:216.80px;font-size:13px;line-height:16px;font-weight:bold;letter-spacing:-0.077px;">Метка</div>
<div class="t" style="left:798.60px;top:241.10px;font-size:13px;line-height:16px;letter-spacing:0.129px;">Текстовая метка</div>
<div class="t" style="left:798.60px;top:285.70px;font-size:13px;line-height:16px;font-weight:bold;letter-spacing:0.003px;">Ввод/вывод (int/float)</div>
<div class="t" style="left:798.60px;top:309.80px;font-size:13px;line-height:16px;letter-spacing:-0.043px;">Поле ввода/вывода (int/float)</div>
<div class="t" style="left:798.60px;top:353.70px;font-size:13px;line-height:16px;font-weight:bold;letter-spacing:-0.025px;">Ввод/вывод (Boolean)</div>
<div class="t" style="left:798.60px;top:377.80px;font-size:13px;line-height:16px;letter-spacing:-0.105px;">Поле ввода/вывода (Boolean)</div>
<div class="t" style="left:798.80px;top:421.20px;font-size:13px;line-height:16px;font-weight:bold;letter-spacing:0.012px;">Динамический текст</div>
<svg style="position:absolute;left:963px;top:444px;" width="14" height="2" viewBox="0 0 14 2"><rect x="0.5" y="0" width="1.2" height="1.2" fill="#a0a0a0"/><rect x="4.5" y="0" width="1.2" height="1.2" fill="#a0a0a0"/><rect x="8.5" y="0" width="1.2" height="1.2" fill="#a0a0a0"/><rect x="12.5" y="0" width="1.2" height="1.2" fill="#a0a0a0"/></svg>
<div style="position:absolute;left:749px;top:448px;width:442px;height:1px;background:#d2d2d2"></div>
<div style="position:absolute;left:749px;top:449px;width:442px;height:24px;background:#fff"></div>
<div class="t" style="left:759.40px;top:452.55px;font-size:14px;line-height:17px;letter-spacing:0.005px;">Свойства Ввод/вывод (int/float)2</div>
<svg style="position:absolute;left:1134px;top:456.5px;" width="8" height="9" viewBox="0 0 8 9"><path d="M2 0.5H6M2.5 0.5V5M5.5 0.5V5M0.5 5H7.5M4 5V9" stroke="#000" stroke-width="1.2" fill="none"/></svg>
<svg style="position:absolute;left:1153px;top:456.5px;" width="11" height="9" viewBox="0 0 11 9"><rect x="0.6" y="0.6" width="9.8" height="7.8" fill="none" stroke="#000" stroke-width="1.2"/><rect x="0.6" y="0.6" width="9.8" height="2.4" fill="#000"/></svg>
<svg style="position:absolute;left:1174px;top:457.0px;" width="8" height="8" viewBox="0 0 8 8"><path d="M1 1L7 7M7 1L1 7" stroke="#000" stroke-width="2"/></svg>
<svg style="position:absolute;left:0;top:0" width="1195" height="510" viewBox="0 0 1195 510"><rect x="752.5" y="476.5" width="28" height="24.5" fill="#cce4f7" stroke="#0078d7" stroke-width="1"/><path d="M756 480H762L759 483.5Z M756 489H762L759 492.5Z" fill="#5a5a5a"/><path d="M764 480.5H770M764 489.5H770" stroke="#5a5a5a" stroke-width="1.6"/><path d="M764 483.5H770M764 492.5H770" stroke="#2f9488" stroke-width="1.6"/><path d="M771.5 481V494" stroke="#5a5a5a" stroke-width="1.2" stroke-dasharray="1 1.2"/><rect x="756" y="495.5" width="3.5" height="2.5" fill="#5a5a5a"/><path d="M761 496.5H770" stroke="#5a5a5a" stroke-width="1"/><text x="789.5" y="486" font-family="Liberation Sans" font-weight="bold" font-size="10" fill="#2f9488" text-anchor="middle">A</text><text x="789.5" y="497" font-family="Liberation Sans" font-weight="bold" font-size="10" fill="#3a3a3a" text-anchor="middle">Z</text><path d="M798 480V496M794.5 492.5L798 496L801.5 492.5" stroke="#5a5a5a" stroke-width="1.5" fill="none"/><path d="M802.5 485V495" stroke="#3070c0" stroke-width="1.2"/><rect x="812" y="477" width="1" height="24" fill="#7a7a7a"/><rect x="820.5" y="480.5" width="14" height="11" rx="1.5" fill="#e8e8e8" stroke="#b8b8b8" stroke-width="1.6"/><rect x="824" y="484" width="7" height="4.5" fill="none" stroke="#b8b8b8" stroke-width="1.3"/><path d="M836 482V494H823" stroke="#c8c8c8" stroke-width="1.5" fill="none"/></svg>
<div style="position:absolute;left:750px;top:504px;width:441px;height:192px;border:1px solid #a8a8a8;box-sizing:border-box;background:#f0f0f0"></div>
<svg style="position:absolute;left:758px;top:513px;" width="12" height="8" viewBox="0 0 12 8"><path d="M1 1.2L6 6.2L11 1.2" stroke="#333" stroke-width="1.6" fill="none"/></svg>
<div class="t" style="left:782.80px;top:508.20px;font-size:15px;line-height:18px;font-weight:bold;letter-spacing:-0.330px;">Параметры</div>
<div style="position:absolute;left:777px;top:529px;width:207px;height:22px;background:#fcfcfc"></div>
<div style="position:absolute;left:985px;top:529px;width:184px;height:22px;background:#fcfcfc"></div>
<div style="position:absolute;left:777px;top:551px;width:392px;height:1px;background:#ececec"></div>
<div class="t" style="left:782.80px;top:531.40px;font-size:15px;line-height:18px;">Переменная</div>
<div class="t" style="left:988.60px;top:531.40px;font-size:15px;line-height:18px;font-weight:bold;">Izm_fl2 [10]</div>
<div style="position:absolute;left:777px;top:552px;width:207px;height:22px;background:#fcfcfc"></div>
<div style="position:absolute;left:985px;top:552px;width:184px;height:22px;background:#fcfcfc"></div>
<div style="position:absolute;left:777px;top:574px;width:392px;height:1px;background:#ececec"></div>
<div class="t" style="left:782.80px;top:554.40px;font-size:15px;line-height:18px;">Тип переменной</div>
<div class="t" style="left:988.60px;top:554.40px;font-size:15px;line-height:18px;">Вещественный</div>
<div style="position:absolute;left:777px;top:575px;width:207px;height:22px;background:#fcfcfc"></div>
<div style="position:absolute;left:985px;top:575px;width:184px;height:22px;background:#fcfcfc"></div>
<div style="position:absolute;left:777px;top:597px;width:392px;height:1px;background:#ececec"></div>
<div class="t" style="left:782.80px;top:577.40px;font-size:15px;line-height:18px;">Знаков</div>
<div class="t" style="left:988.60px;top:577.40px;font-size:15px;line-height:18px;">3</div>
<div style="position:absolute;left:777px;top:598px;width:207px;height:22px;background:#fcfcfc"></div>
<div style="position:absolute;left:985px;top:598px;width:184px;height:22px;background:#fcfcfc"></div>
<div style="position:absolute;left:777px;top:620px;width:392px;height:1px;background:#ececec"></div>
<div class="t" style="left:782.80px;top:600.40px;font-size:15px;line-height:18px;">После запятой</div>
<div class="t" style="left:988.60px;top:600.40px;font-size:15px;line-height:18px;">1</div>
<div style="position:absolute;left:777px;top:621px;width:207px;height:22px;background:#fcfcfc"></div>
<div style="position:absolute;left:985px;top:621px;width:184px;height:22px;background:#fcfcfc"></div>
<div style="position:absolute;left:777px;top:643px;width:392px;height:1px;background:#ececec"></div>
<div class="t" style="left:782.80px;top:623.40px;font-size:15px;line-height:18px;">Текст до</div>
<div class="t" style="left:988.60px;top:623.40px;font-size:15px;line-height:18px;font-weight:bold;">T2</div>
<div style="position:absolute;left:777px;top:644px;width:207px;height:22px;background:#fcfcfc"></div>
<div style="position:absolute;left:985px;top:644px;width:184px;height:22px;background:#fcfcfc"></div>
<div style="position:absolute;left:777px;top:666px;width:392px;height:1px;background:#ececec"></div>
<div class="t" style="left:782.80px;top:646.40px;font-size:15px;line-height:18px;">Текст после</div>
<div style="position:absolute;left:777px;top:667px;width:207px;height:22px;background:#efefef"></div>
<div style="position:absolute;left:985px;top:667px;width:184px;height:22px;background:#fcfcfc"></div>
<div style="position:absolute;left:777px;top:689px;width:392px;height:1px;background:#ececec"></div>
<div class="t" style="left:782.80px;top:669.40px;font-size:15px;line-height:18px;">Редактируемо</div>
<div class="t" style="left:988.60px;top:669.40px;font-size:15px;line-height:18px;font-weight:bold;">Нет</div>
<div style="position:absolute;left:777px;top:690px;width:207px;height:5px;background:#fcfcfc"></div>
<div style="position:absolute;left:985px;top:690px;width:184px;height:5px;background:#fcfcfc"></div>
<div style="position:absolute;left:1169px;top:505px;width:21px;height:190px;background:#f0f0f0"></div>
<div style="position:absolute;left:1170px;top:587px;width:19px;height:69px;background:#cdcdcd"></div>
<svg style="position:absolute;left:1174px;top:511px;" width="12" height="8" viewBox="0 0 12 8"><path d="M1 6.5L6 1.5L11 6.5" stroke="#606060" stroke-width="1.5" fill="none"/></svg>
<svg style="position:absolute;left:1174px;top:680px;" width="12" height="8" viewBox="0 0 12 8"><path d="M1 1.5L6 6.5L11 1.5" stroke="#606060" stroke-width="1.5" fill="none"/></svg>
<div style="position:absolute;left:750px;top:699px;width:441px;height:35px;border:1px solid #a8a8a8;box-sizing:border-box;background:#f0f0f0"></div>
<div class="t" style="left:758.50px;top:705.00px;font-size:15px;line-height:18px;font-weight:bold;letter-spacing:-0.181px;">Редактируемо</div>
<div style="position:absolute;left:2px;top:736px;width:1191px;height:1px;background:#c8c8c8"></div>
<div style="position:absolute;left:365px;top:737px;width:2px;height:29px;background:#bdbdbd"></div>
<div style="position:absolute;left:465px;top:737px;width:2px;height:29px;background:#bdbdbd"></div>
<div style="position:absolute;left:564px;top:737px;width:2px;height:29px;background:#bdbdbd"></div>
<div style="position:absolute;left:664px;top:737px;width:2px;height:29px;background:#bdbdbd"></div>
<div style="position:absolute;left:765px;top:737px;width:2px;height:29px;background:#bdbdbd"></div>
<div style="position:absolute;left:864px;top:737px;width:2px;height:29px;background:#bdbdbd"></div>
<div style="position:absolute;left:1059px;top:737px;width:2px;height:29px;background:#bdbdbd"></div>
<div style="position:absolute;left:1172px;top:737px;width:2px;height:29px;background:#bdbdbd"></div>
<div style="position:absolute;left:566px;top:737px;width:12px;height:29px;background:#007d00"></div>
<div style="position:absolute;left:766px;top:737px;width:7px;height:29px;background:#007d00"></div>
<div class="t" style="left:392.60px;top:742.70px;font-size:15px;line-height:18px;letter-spacing:-0.880px;">ФБ: 0%</div>
<div class="t" style="left:477.70px;top:742.70px;font-size:15px;line-height:18px;letter-spacing:-0.433px;">Перем.: 0%</div>
<div class="t" style="left:568.00px;top:742.70px;font-size:15px;line-height:18px;letter-spacing:-0.604px;">ЭСППЗУ: 13%</div>
<div class="t" style="left:688.70px;top:742.70px;font-size:15px;line-height:18px;letter-spacing:-0.658px;">ПЗУ: 1%</div>
<div class="t" style="left:788.00px;top:742.70px;font-size:15px;line-height:18px;letter-spacing:-0.828px;">ОЗУ: 8%</div>
<div class="t" style="left:890.00px;top:742.70px;font-size:15px;line-height:18px;letter-spacing:0.290px;">Прибор не подключен</div>
<div class="t" style="left:1084.00px;top:742.70px;font-size:15px;line-height:18px;letter-spacing:-0.467px;">Отсутствует</div>
<svg style="position:absolute;left:872px;top:743px;" width="17" height="16" viewBox="0 0 17 16"><path d="M8.5 1L16.5 15H0.5Z" fill="#f5c400" stroke="#e8b000" stroke-width="0.8" stroke-linejoin="round"/><path d="M8.5 5.5V10.5" stroke="#3a3000" stroke-width="1.8"/><rect x="7.6" y="11.8" width="1.8" height="1.8" fill="#3a3000"/></svg>
<svg style="position:absolute;left:1068px;top:745px;" width="13" height="11" viewBox="0 0 13 11"><path d="M1 5.5L4.8 9.3L12 1.5" stroke="#3aa090" stroke-width="2.2" fill="none"/></svg>
<svg style="position:absolute;left:1176px;top:750px;" width="16" height="16" viewBox="0 0 16 16"><rect x="12.6" y="4.6" width="2" height="2" fill="#fff"/><rect x="12" y="4" width="1.7" height="1.7" fill="#8f8f8f"/><rect x="8.6" y="8.6" width="2" height="2" fill="#fff"/><rect x="8" y="8" width="1.7" height="1.7" fill="#8f8f8f"/><rect x="12.6" y="8.6" width="2" height="2" fill="#fff"/><rect x="12" y="8" width="1.7" height="1.7" fill="#8f8f8f"/><rect x="4.6" y="12.6" width="2" height="2" fill="#fff"/><rect x="4" y="12" width="1.7" height="1.7" fill="#8f8f8f"/><rect x="8.6" y="12.6" width="2" height="2" fill="#fff"/><rect x="8" y="12" width="1.7" height="1.7" fill="#8f8f8f"/><rect x="12.6" y="12.6" width="2" height="2" fill="#fff"/><rect x="12" y="12" width="1.7" height="1.7" fill="#8f8f8f"/></svg>
</body></html>
